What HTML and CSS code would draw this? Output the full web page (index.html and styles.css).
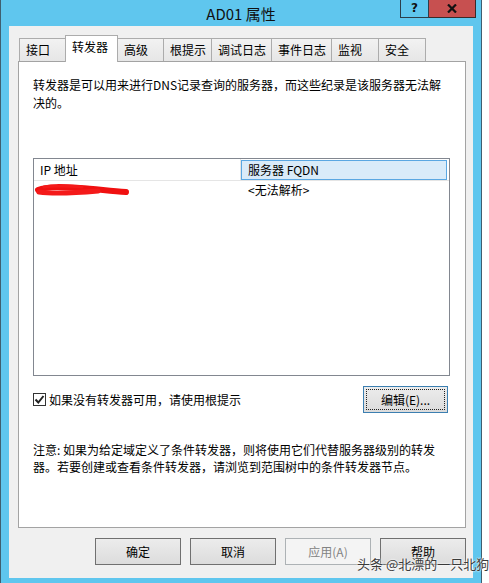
FILE: index.html
```html
<!doctype html>
<html lang="zh-CN">
  <head>
    <meta charset="UTF-8" />
    <title>AD01 属性</title>
    <link rel="stylesheet" href="styles.css">
  </head>
  <body>
    <div class="window">
      <div class="titlebar">
        <div></div>
        <div class="title">AD01 属性</div>
        <div class="caption-btns">
          <span class="cap-help">?</span>
          <span class="cap-close">
            <svg width="10" height="9" viewBox="0 0 10 9">
              <path d="M1 0.5 L9 8.5 M9 0.5 L1 8.5" stroke="#111" stroke-width="2.2" />
            </svg>
          </span>
        </div>
      </div>

      <div class="client">
        <div class="tabs">
          <div class="tab w46">接口</div>
          <div class="tab tab-active w52">转发器</div>
          <div class="tab w46">高级</div>
          <div class="tab w48">根提示</div>
          <div class="tab w60">调试日志</div>
          <div class="tab w60">事件日志</div>
          <div class="tab w47">监视</div>
          <div class="tab tab-last w48">安全</div>
        </div>

        <div class="panel">
          <p class="desc">转发器是可以用来进行DNS记录查询的服务器，而这些纪录是该服务器无法解<br>决的。</p>

          <div class="listview">
            <div class="lv-header">
              <div class="lv-col col-ip">IP 地址</div>
              <div class="lv-col col-fqdn">服务器 FQDN</div>
            </div>
            <div class="lv-row">
              <div class="lv-cell col-ip">
                <!-- 打码的 IP -->
                <svg class="scribble" width="96" height="16" viewBox="0 0 96 16">
                  <path d="M4 8 C 14 4, 30 5, 46 6 S 76 9, 92 10" stroke="#f01010" stroke-width="6" fill="none" stroke-linecap="round" />
                  <path d="M5 10 C 20 12, 40 11, 64 9" stroke="#f41a1a" stroke-width="5" fill="none" stroke-linecap="round" />
                  <path d="M10 5 C 22 3, 34 4, 48 5" stroke="#f41a1a" stroke-width="3" fill="none" stroke-linecap="round" />
                </svg>
              </div>
              <div class="lv-cell col-fqdn">&lt;无法解析&gt;</div>
            </div>
          </div>

          <div class="options">
            <label class="check">
              <span class="checkbox">
                <svg width="11" height="11" viewBox="0 0 11 11">
                  <path d="M1.5 5.5 L4.3 8.5 L9.5 2" stroke="#222" stroke-width="2" fill="none" />
                </svg>
              </span>
              如果没有转发器可用，请使用根提示
            </label>
            <button class="btn btn-focus"><span class="focus-rect">编辑(E)...</span></button>
          </div>

          <p class="note">注意: 如果为给定域定义了条件转发器，则将使用它们代替服务器级别的转发<br>器。若要创建或查看条件转发器，请浏览到范围树中的条件转发器节点。</p>
        </div>

        <div class="dialog-btns">
          <button class="btn">确定</button>
          <button class="btn">取消</button>
          <button class="btn btn-disabled">应用(A)</button>
          <button class="btn">帮助</button>
        </div>
      </div>

      <div class="watermark">头条 @北漂的一只北狗</div>
    </div>
  </body>
</html>
```

FILE: styles.css
```css
* {
  margin: 0;
  padding: 0;
  box-sizing: border-box;
}

body {
  font-family: "Noto Sans CJK SC", "Liberation Sans", sans-serif;
  font-size: 12px;
  color: #000;
  background: #fff;
  width: 489px;
  height: 583px;
  overflow: hidden;
}

.window {
  position: relative;
  width: 482px;
  height: 600px;
  background: #5fc6ee;
  border-left: 1px solid #3f5f70;
  border-right: 1px solid #3f5f70;
}

/* 标题栏 */
.titlebar {
  display: grid;
  grid-template-columns: 1fr auto 1fr;
  height: 26px;
}

.title {
  font-size: 15px;
  line-height: 26px;
  color: #111;
  padding-top: 1px;
}

.caption-btns {
  justify-self: end;
  align-self: start;
  display: flex;
  margin-right: 5px;
}

.cap-help {
  width: 29px;
  height: 18px;
  border: 1px solid #2c3e4a;
  border-top: none;
  font-family: "DejaVu Sans", sans-serif;
  font-weight: bold;
  font-size: 12px;
  line-height: 16px;
  text-align: center;
  color: #111;
}

.cap-close {
  width: 47px;
  height: 18px;
  background: #c75050;
  border: 1px solid #3a2a2a;
  border-top: none;
  border-left: none;
  display: flex;
  align-items: center;
  justify-content: center;
}

/* 客户区 */
.client {
  margin: 0 8px;
  height: 552px;
  background: #f0f0f0;
  padding: 10px 7px 0 9px;
}

.tabs {
  display: flex;
  align-items: flex-end;
  height: 25px;
  padding-left: 1px;
  position: relative;
  z-index: 1;
}

.tab {
  height: 23px;
  border: 1px solid #acacac;
  border-right: none;
  border-bottom: none;
  background: linear-gradient(#f2f2f2, #e6e6e6);
  padding-left: 6px;
  line-height: 21px;
  white-space: nowrap;
}

.tab-last {
  border-right: 1px solid #acacac;
}

.tab-active {
  height: 27px;
  margin-bottom: -1px;
  background: #fff;
  border-right: 1px solid #acacac;
  margin-right: -1px;
  line-height: 22px;
}

.w46 { width: 46px; }
.w47 { width: 47px; }
.w48 { width: 48px; }
.w52 { width: 53px; }
.w60 { width: 60px; }

.panel {
  background: #fff;
  border: 1px solid #a3a3a3;
  height: 467px;
  padding: 14px 15px 0 14px;
}

.desc {
  line-height: 18px;
  white-space: nowrap;
}

/* 列表 */
.listview {
  margin-top: 46px;
  height: 218px;
  border: 1px solid #828790;
}

.lv-header {
  display: flex;
  height: 22px;
  border-bottom: 1px solid #e5e5e5;
}

.lv-col {
  line-height: 20px;
  padding-left: 6px;
}

.col-ip {
  width: 207px;
}

.lv-header .col-ip {
  border-right: 1px solid #e5e5e5;
  padding-top: 1px;
}

.lv-header .col-fqdn {
  width: 206px;
  margin-top: 1px;
  height: 20px;
  background: #d9ebf9;
  border: 1px solid #5aa7e2;
  line-height: 18px;
}

.lv-row {
  display: flex;
  height: 18px;
}

.lv-cell {
  line-height: 17px;
}

.lv-row .col-fqdn {
  padding-left: 7px;
}

.scribble {
  display: block;
  margin-top: 1px;
}

/* 复选框和按钮 */
.options {
  display: flex;
  align-items: center;
  justify-content: space-between;
  margin-top: 10px;
  padding-right: 2px;
}

.check {
  display: flex;
  align-items: center;
  gap: 3px;
}

.checkbox {
  width: 13px;
  height: 13px;
  border: 1px solid #333;
  background: #fff;
  display: flex;
  align-items: center;
  justify-content: center;
}

.btn {
  font-family: inherit;
  font-size: 12px;
  color: #000;
  width: 86px;
  height: 27px;
  background: linear-gradient(#ececec, #dcdcdc);
  border: 1px solid #707070;
}

.btn-focus {
  width: 85px;
  border-color: #3c7fb1;
  padding: 2px;
}

.focus-rect {
  display: block;
  height: 100%;
  border: 1px dotted #222;
  line-height: 19px;
}

.btn-disabled {
  background: #f4f4f4;
  border-color: #adb2b5;
  color: #838383;
}

.note {
  margin-top: 28px;
  line-height: 17px;
  white-space: nowrap;
}

.dialog-btns {
  display: flex;
  justify-content: flex-end;
  gap: 9px;
  margin-top: 10px;
}

/* 水印 */
.watermark {
  position: absolute;
  left: 356px;
  top: 557px;
  font-size: 13px;
  line-height: 13px;
  color: #3a3a3a;
  white-space: nowrap;
  text-shadow: 0 0 2px #fff, 0 0 2px #fff;
}
```
